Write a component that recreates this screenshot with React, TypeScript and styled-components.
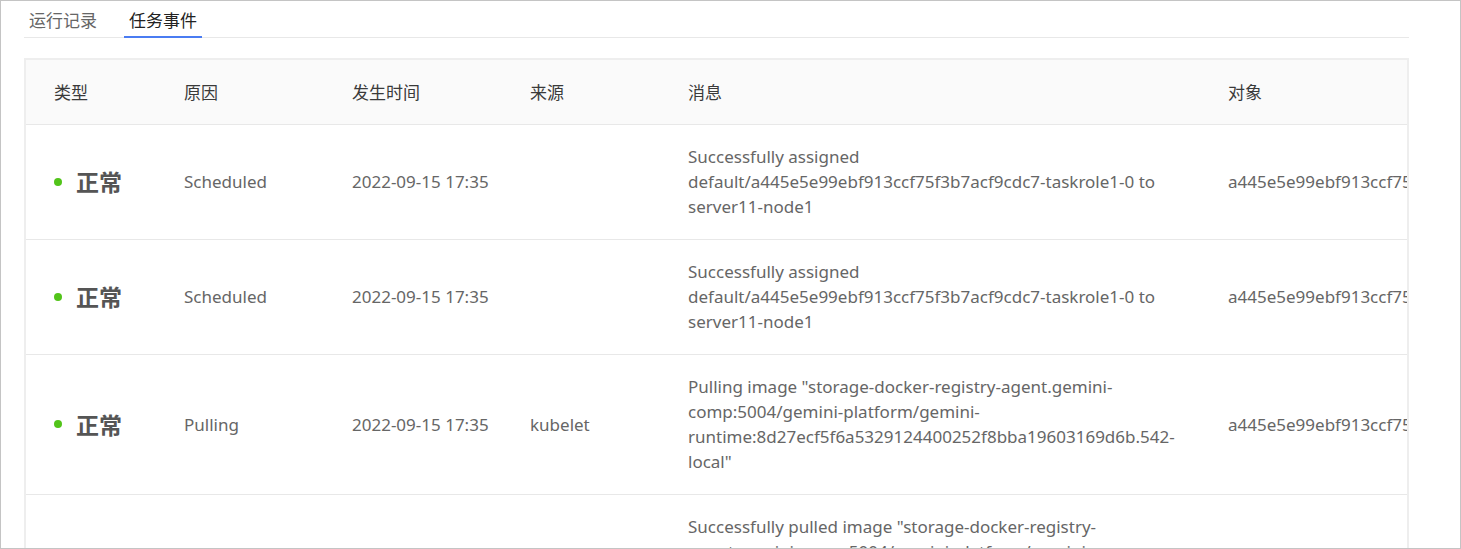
import React, { FC, useState } from 'react';
import styled, { createGlobalStyle } from 'styled-components';

interface EventRow {
  id: number;
  type: string;
  reason: string;
  time: string;
  source: string;
  message: string;
  object: string;
}

const OBJ = 'a445e5e99ebf913ccf75f3b7acf9cdc7-taskrole1-0';

const events: EventRow[] = [
  {
    id: 1,
    type: '正常',
    reason: 'Scheduled',
    time: '2022-09-15 17:35',
    source: '',
    message: `Successfully assigned default/${OBJ} to server11-node1`,
    object: OBJ,
  },
  {
    id: 2,
    type: '正常',
    reason: 'Scheduled',
    time: '2022-09-15 17:35',
    source: '',
    message: `Successfully assigned default/${OBJ} to server11-node1`,
    object: OBJ,
  },
  {
    id: 3,
    type: '正常',
    reason: 'Pulling',
    time: '2022-09-15 17:35',
    source: 'kubelet',
    message:
      'Pulling image "storage-docker-registry-agent.gemini-comp:5004/gemini-platform/gemini-runtime:8d27ecf5f6a5329124400252f8bba19603169d6b.542-local"',
    object: OBJ,
  },
  {
    id: 4,
    type: '正常',
    reason: 'Pulled',
    time: '2022-09-15 17:36',
    source: 'kubelet',
    message:
      'Successfully pulled image "storage-docker-registry-agent.gemini-comp:5004/gemini-platform/gemini-runtime:8d27ecf5f6a5329124400252f8bba19603169d6b.542-local" in 1.2s',
    object: OBJ,
  },
];

const columns = [
  { key: 'type', title: '类型', width: 130 },
  { key: 'reason', title: '原因', width: 168 },
  { key: 'time', title: '发生时间', width: 178 },
  { key: 'source', title: '来源', width: 158 },
  { key: 'message', title: '消息', width: 540 },
  { key: 'object', title: '对象', width: 320 },
];

const GlobalStyle = createGlobalStyle`
  html, body {
    margin: 0;
    padding: 0;
    background: #fff;
  }
  body {
    font-family: "Noto Sans", "Noto Sans CJK SC", sans-serif;
  }
`;

const Frame = styled.div`
  box-sizing: border-box;
  width: 1461px;
  height: 549px;
  border: 1px solid #c4c4c4;
  padding: 0 51px 0 23px;
  overflow: hidden;
  background: #fff;
`;

const TabBar = styled.div`
  display: flex;
  gap: 22px;
  height: 36px;
  border-bottom: 1px solid #e8e8e8;
`;

const Tab = styled.div<{ $active?: boolean }>`
  display: flex;
  align-items: center;
  padding: 2px 5px 0;
  margin-bottom: -1px;
  font-size: 17px;
  color: ${p => (p.$active ? '#222' : '#666')};
  border-bottom: 2px solid ${p => (p.$active ? '#4a7cf2' : 'transparent')};
  cursor: pointer;
`;

const TableBox = styled.div`
  margin-top: 20px;
  border: 2px solid #eeeeee;
  overflow: hidden;
`;

const Table = styled.table`
  table-layout: fixed;
  border-collapse: collapse;
  width: 1494px;
  font-size: 17px;
  line-height: 25px;
`;

const HeadCell = styled.th`
  height: 64px;
  padding: 0 8px 0 28px;
  text-align: left;
  font-weight: 400;
  color: #3a3a3a;
  background: #fafafa;
  border-bottom: 1px solid #e8e8e8;
`;

const Row = styled.tr`
  border-bottom: 1px solid #e8e8e8;
`;

const Cell = styled.td<{ $nowrap?: boolean }>`
  padding: 19px 10px 20px 28px;
  vertical-align: middle;
  color: #666;
  white-space: ${p => (p.$nowrap ? 'nowrap' : 'normal')};
  overflow: hidden;
`;

const Status = styled.div`
  display: flex;
  align-items: center;
  gap: 14px;
`;

const Dot = styled.span`
  width: 8px;
  height: 8px;
  border-radius: 50%;
  background: #52c41a;
`;

const StatusText = styled.span`
  font-size: 23px;
  font-weight: 700;
  color: #555;
  font-family: "Noto Sans CJK SC", sans-serif;
`;

const App: FC = () => {
  const [tab, setTab] = useState('events');

  return (
    <>
      <GlobalStyle />
      <Frame>
        <TabBar>
          <Tab $active={tab === 'runs'} onClick={() => setTab('runs')}>
            运行记录
          </Tab>
          <Tab $active={tab === 'events'} onClick={() => setTab('events')}>
            任务事件
          </Tab>
        </TabBar>
        <TableBox>
          <Table>
            <colgroup>
              {columns.map(col => (
                <col key={col.key} style={{ width: col.width }} />
              ))}
            </colgroup>
            <thead>
              <tr>
                {columns.map(col => (
                  <HeadCell key={col.key}>{col.title}</HeadCell>
                ))}
              </tr>
            </thead>
            <tbody>
              {events.map(ev => (
                <Row key={ev.id}>
                  <Cell>
                    <Status>
                      <Dot />
                      <StatusText>{ev.type}</StatusText>
                    </Status>
                  </Cell>
                  <Cell>{ev.reason}</Cell>
                  <Cell $nowrap>{ev.time}</Cell>
                  <Cell>{ev.source}</Cell>
                  <Cell>{ev.message}</Cell>
                  <Cell $nowrap>{ev.object}</Cell>
                </Row>
              ))}
            </tbody>
          </Table>
        </TableBox>
      </Frame>
    </>
  );
};

export default App;
